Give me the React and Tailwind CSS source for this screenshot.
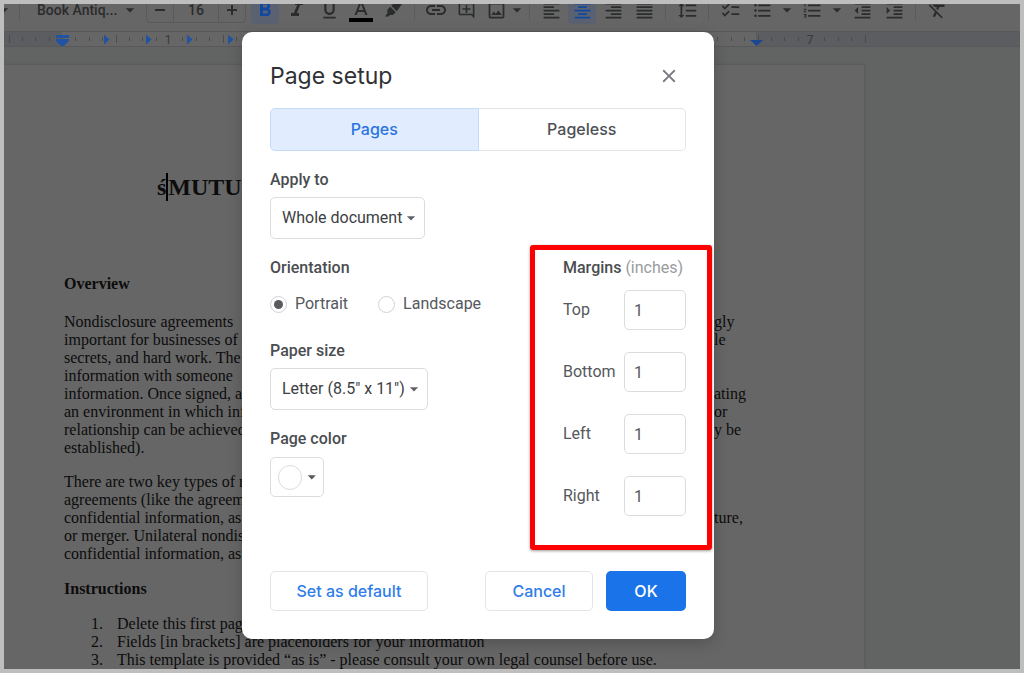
import { useState } from 'react'
import {
  MdArrowDropDown,
  MdChecklist,
  MdClose,
  MdFormatAlignCenter,
  MdFormatAlignJustify,
  MdFormatAlignLeft,
  MdFormatAlignRight,
  MdFormatBold,
  MdFormatClear,
  MdFormatIndentDecrease,
  MdFormatIndentIncrease,
  MdFormatItalic,
  MdFormatLineSpacing,
  MdFormatListBulleted,
  MdFormatListNumbered,
  MdFormatUnderlined,
  MdLink,
  MdOutlineAddComment,
  MdOutlineImage,
} from 'react-icons/md'

const overview = [
  ['Nondisclosure agreements', 'gly'],
  ['important for businesses of all', 'le'],
  ['secrets, and hard work. The'],
  ['information with someone'],
  ['information. Once signed, an', 'ating'],
  ['an environment in which inf', 'or'],
  ['relationship can be achieved', 'y be'],
  ['established).'],
]

const types = [
  ['There are two key types of n'],
  ['agreements (like the agreeme'],
  ['confidential information, as', 'ture,'],
  ['or merger. Unilateral nondis'],
  ['confidential information, as'],
]

const instructions = [
  'Delete this first page',
  'Fields [in brackets] are placeholders for your information',
  'This template is provided “as is” - please consult your own legal counsel before use.',
]

function ToolButton({ icon: Icon, label, active, size = 21 }) {
  return (
    <button
      type="button"
      aria-label={label}
      className={`flex h-7 w-7 shrink-0 items-center justify-center rounded-sm ${
        active ? 'bg-[#5a6272] text-[#1148a0]' : 'text-[#2b2c2d]'
      }`}
    >
      <Icon size={size} />
    </button>
  )
}

function MoreButton({ label, className = 'w-3.5' }) {
  return (
    <button type="button" aria-label={label} className={`flex shrink-0 justify-center text-[#2b2c2d] ${className}`}>
      <MdArrowDropDown size={20} className="shrink-0" />
    </button>
  )
}

function Divider() {
  return <div className="mx-[7px] h-5 w-px shrink-0 bg-[#595a5b]" />
}

function TextColorIcon() {
  return (
    <svg viewBox="0 0 24 24" className="h-6 w-6" fill="currentColor">
      <path d="M11 3L5.5 17h2.25l1.12-3h6.25l1.12 3h2.25L13 3h-2zm-1.38 9L12 5.67 14.38 12H9.62z" />
      <path d="M0 20h24v4H0z" fill="#000" />
    </svg>
  )
}

function MarkerIcon() {
  return (
    <svg viewBox="0 0 24 24" className="h-6 w-6" fill="currentColor">
      <path d="M9.200 8.700l5.600 5.600-3 2.700H8.900l-1.200 1.600H3.800l2.600-3.200v-3.600z" />
      <path d="M10.300 7.700L16 2.400c.6-.5 1.500-.5 2.100 0l2.300 2.300c.6.600.6 1.500 0 2.100l-4.600 6.400z" />
    </svg>
  )
}

function Toolbar() {
  return (
    <div className="flex h-[27px] shrink-0 items-end overflow-hidden bg-[#666] pb-[7px]">
      <div className="flex h-7 items-center">
        <MoreButton label="Styles" className="w-0" />
        <div className="ml-[15px] h-5 w-px shrink-0 bg-[#595a5b]" />
        <button
          type="button"
          className="flex w-[126px] shrink-0 items-center justify-between pr-1.5 pl-[17px] text-sm font-medium text-[#2b2c2d]"
        >
          Book Antiq...
          <MdArrowDropDown size={20} />
        </button>
        <div className="mr-[5px] flex h-[26px] w-[100px] shrink-0 items-center rounded-sm border border-[#595a5b] text-[#2b2c2d]">
          <button type="button" aria-label="Decrease font size" className="flex flex-1 justify-center">
            <svg width="10" height="10" fill="currentColor">
              <path d="M0 4h10v2H0z" />
            </svg>
          </button>
          <input
            aria-label="Font size"
            defaultValue="16"
            className="h-full w-[46px] border-x border-[#595a5b] text-center text-sm font-medium"
          />
          <button type="button" aria-label="Increase font size" className="flex flex-1 justify-center">
            <svg width="10" height="10" fill="currentColor">
              <path d="M4 0h2v4h4v2H6v4H4V6H0V4h4z" />
            </svg>
          </button>
        </div>
        <div className="flex gap-1">
          <ToolButton icon={MdFormatBold} label="Bold" size={24} active />
          <ToolButton icon={MdFormatItalic} label="Italic" size={24} />
          <ToolButton icon={MdFormatUnderlined} label="Underline" />
          <ToolButton icon={TextColorIcon} label="Text color" />
          <ToolButton icon={MarkerIcon} label="Highlight color" />
        </div>
        <Divider />
        <div className="flex items-center gap-0.5">
          <ToolButton icon={MdLink} label="Insert link" size={24} />
          <ToolButton icon={MdOutlineAddComment} label="Add comment" size={19} />
          <ToolButton icon={MdOutlineImage} label="Insert image" />
          <MoreButton label="Image options" className="w-2.5" />
        </div>
        <Divider />
        <div className="flex gap-[3px]">
          <ToolButton icon={MdFormatAlignLeft} label="Left align" />
          <ToolButton icon={MdFormatAlignCenter} label="Center align" active />
          <ToolButton icon={MdFormatAlignRight} label="Right align" />
          <ToolButton icon={MdFormatAlignJustify} label="Justify" />
        </div>
        <Divider />
        <ToolButton icon={MdFormatLineSpacing} label="Line spacing" />
        <Divider />
        <div className="flex items-center gap-1">
          <ToolButton icon={MdChecklist} label="Checklist" />
          <ToolButton icon={MdFormatListBulleted} label="Bulleted list" />
          <MoreButton label="Bulleted list options" />
          <ToolButton icon={MdFormatListNumbered} label="Numbered list" />
          <MoreButton label="Numbered list options" />
          <ToolButton icon={MdFormatIndentDecrease} label="Decrease indent" />
          <ToolButton icon={MdFormatIndentIncrease} label="Increase indent" />
        </div>
        <Divider />
        <ToolButton icon={MdFormatClear} label="Clear formatting" />
      </div>
    </div>
  )
}

function Ruler() {
  const inch = 107
  const zero = 58
  const ticks = []
  for (let i = -4; i <= 60; i++) {
    // whole inches carry a number instead of a tick
    if (i > 0 && i % 8 === 0) continue
    ticks.push({ x: Math.round(zero + (i * inch) / 8), tall: i % 4 === 0 })
  }
  return (
    <div className="h-4 shrink-0 overflow-hidden border-y border-[#58595a] bg-[#5c5d60]">
      <svg width="900" height="14" className="block">
        <rect x={zero} width="694" height="14" fill="#666" />
        {ticks.map((t) => (
          <rect key={t.x} x={t.x} y={t.tall ? 3 : 5} width="1" height={t.tall ? 8 : 4} fill="#4b4c4d" />
        ))}
        {[1, 2, 3, 4, 5, 6, 7].map((n) => (
          <text key={n} x={zero - 1 + n * inch} y="12" textAnchor="middle" fontSize="12" fill="#38393a">
            {n}
          </text>
        ))}
        {[100, 142, 183, 224].map((x) => (
          <path key={x} d={`M${x} 2.5l5.5 5-5.5 5z`} fill="#2253a3" />
        ))}
        <path d="M52 3h13v3H52zM52 7h13v2l-5 5h-3l-5-5z" fill="#2253a3" />
        <path d="M746 8h13l-6.500 6z" fill="#1b4690" />
      </svg>
    </div>
  )
}

function Paragraph({ lines }) {
  return (
    <div className="mt-4">
      {lines.map(([start, end]) => (
        <div key={start} className="grid grid-cols-[650px_1fr] whitespace-nowrap">
          <span>{start}</span>
          <span>{end}</span>
        </div>
      ))}
    </div>
  )
}

function Document() {
  return (
    <div className="min-h-0 flex-1 overflow-hidden bg-[#626463] pt-[18px]">
      <div className="h-full w-full max-w-[860px] bg-[#666] px-[60px] pt-[106px] font-['Liberation_Serif',serif] text-[16px] leading-[18px] text-[#0c0c0c] shadow-[0_0_3px_#505251]">
        <h1 className="flex items-center pl-[93px] text-2xl leading-8 font-bold">
          ś<span className="h-7 w-0.5 bg-black" />
          MUTUAL
        </h1>
        <h2 className="mt-[72px] mb-5 font-bold">Overview</h2>
        <Paragraph lines={overview} />
        <Paragraph lines={types} />
        <h2 className="mt-[17px] font-bold">Instructions</h2>
        <ol className="mt-[17px] list-none whitespace-nowrap">
          {instructions.map((text, i) => (
            <li key={text} className="flex pl-[27px]">
              <span className="w-[26px] shrink-0">{i + 1}.</span>
              {text}
            </li>
          ))}
        </ol>
      </div>
    </div>
  )
}

function Select({ id, value, className }) {
  return (
    <div className={`relative ${className}`}>
      <select
        id={id}
        defaultValue={value}
        className="h-[42px] w-full appearance-none rounded-[5px] border border-[#dadce0] bg-white pl-[11px] text-base text-[#3c4043]"
      >
        <option>{value}</option>
      </select>
      <MdArrowDropDown size={20} className="pointer-events-none absolute top-[11px] right-1 text-[#5f6368]" />
    </div>
  )
}

function Radio({ label, checked, onChange }) {
  return (
    <label className="flex items-center gap-2">
      <input
        type="radio"
        name="orientation"
        checked={checked}
        onChange={onChange}
        className="h-[17px] w-[17px] appearance-none rounded-full border border-[#d0d2d5] bg-white bg-clip-content p-[3px] checked:bg-[#5a5b5d]"
      />
      {label}
    </label>
  )
}

function PageSetup() {
  const [orientation, setOrientation] = useState('Portrait')
  const [margins, setMargins] = useState({ Top: '1', Bottom: '1', Left: '1', Right: '1' })

  return (
    <div
      role="dialog"
      aria-labelledby="dialog-title"
      className="w-full max-w-[472px] rounded-[10px] bg-white px-7 pt-6 pb-7 leading-5 text-[#55585c] shadow-[0_4px_16px_rgba(0,0,0,0.2)]"
    >
      <div className="flex h-10 items-center justify-between">
        <h2 id="dialog-title" className="font-['Inter',sans-serif] text-[23px] text-[#303135]">
          Page setup
        </h2>
        <button type="button" aria-label="Close" className="flex w-[34px] justify-center text-[#77797c]">
          <MdClose size={22} />
        </button>
      </div>

      <div role="tablist" className="mt-3 flex h-[43px] font-['Inter',sans-serif] font-medium">
        <button
          type="button"
          role="tab"
          aria-selected="true"
          className="flex-1 rounded-l-[5px] border border-[#c6dafc] bg-[#e1ecfe] pb-0.5 text-[#2a74e0]"
        >
          Pages
        </button>
        <button
          type="button"
          role="tab"
          aria-selected="false"
          className="flex-1 rounded-r-[5px] border border-l-0 border-[#e3e4e6] pb-0.5 text-[#4d5054]"
        >
          Pageless
        </button>
      </div>

      <label htmlFor="apply" className="mt-[19px] mb-[7px] block font-medium text-[#4a4d51]">
        Apply to
      </label>
      <Select id="apply" value="Whole document" className="w-[155px]" />

      <div className="flex items-start justify-between">
        <div>
          <div id="orientation" className="mt-[19px] font-medium text-[#4a4d51]">
            Orientation
          </div>
          <div role="radiogroup" aria-labelledby="orientation" className="mt-4 flex gap-[30px]">
            {['Portrait', 'Landscape'].map((name) => (
              <Radio key={name} label={name} checked={orientation === name} onChange={() => setOrientation(name)} />
            ))}
          </div>

          <label htmlFor="paper" className="mt-[27px] mb-[7px] block font-medium text-[#4a4d51]">
            Paper size
          </label>
          <Select id="paper" value={'Letter (8.5" x 11")'} className="w-[158px]" />

          <div id="color" className="mt-[19px] mb-2 font-medium text-[#4a4d51]">
            Page color
          </div>
          <button
            type="button"
            aria-labelledby="color"
            className="flex h-10 w-[54px] items-center justify-between rounded-[5px] border border-[#dadce0] pr-px pl-[7px]"
          >
            <span className="h-[25px] w-[25px] rounded-full border border-[#dadce0]" />
            <MdArrowDropDown size={20} />
          </button>
        </div>

        <div
          role="group"
          aria-labelledby="margins"
          className="mt-1.5 -mr-[26px] w-[182px] shrink-0 rounded-[3px] border-[5px] border-[#fe0000] pt-2 pb-[29px] pl-7 shadow-[0_1px_3px_rgba(0,0,0,0.4)]"
        >
          <div id="margins" className="mb-3 text-[#999b9e]">
            <span className="font-medium text-[#4a4d51]">Margins</span> (inches)
          </div>
          <div className="flex flex-col gap-[22px]">
            {Object.keys(margins).map((side) => (
              <label key={side} className="flex items-center">
                <span className="w-[61px]">{side}</span>
                <input
                  type="text"
                  value={margins[side]}
                  onChange={(e) => setMargins({ ...margins, [side]: e.target.value })}
                  className="h-10 w-[62px] rounded-[5px] border border-[#dadce0] px-[9px]"
                />
              </label>
            ))}
          </div>
        </div>
      </div>

      <div className="mt-[21px] flex h-10 font-['Inter',sans-serif] font-medium text-[#2f7de9]">
        <button type="button" className="w-[158px] rounded-[5px] border border-[#e3e4e6]">
          Set as default
        </button>
        <button type="button" className="mr-[13px] ml-auto w-[108px] rounded-[5px] border border-[#e3e4e6]">
          Cancel
        </button>
        <button type="button" className="w-20 rounded-[5px] bg-[#1a73e8] text-white">
          OK
        </button>
      </div>
    </div>
  )
}

export default function App() {
  return (
    <div className="relative flex h-screen flex-col overflow-hidden border-4 border-[#bebebe] font-['Roboto',sans-serif]">
      <Toolbar />
      <Ruler />
      <Document />
      <div className="absolute inset-0 overflow-hidden pt-7 pl-[238px]">
        <PageSetup />
      </div>
    </div>
  )
}
